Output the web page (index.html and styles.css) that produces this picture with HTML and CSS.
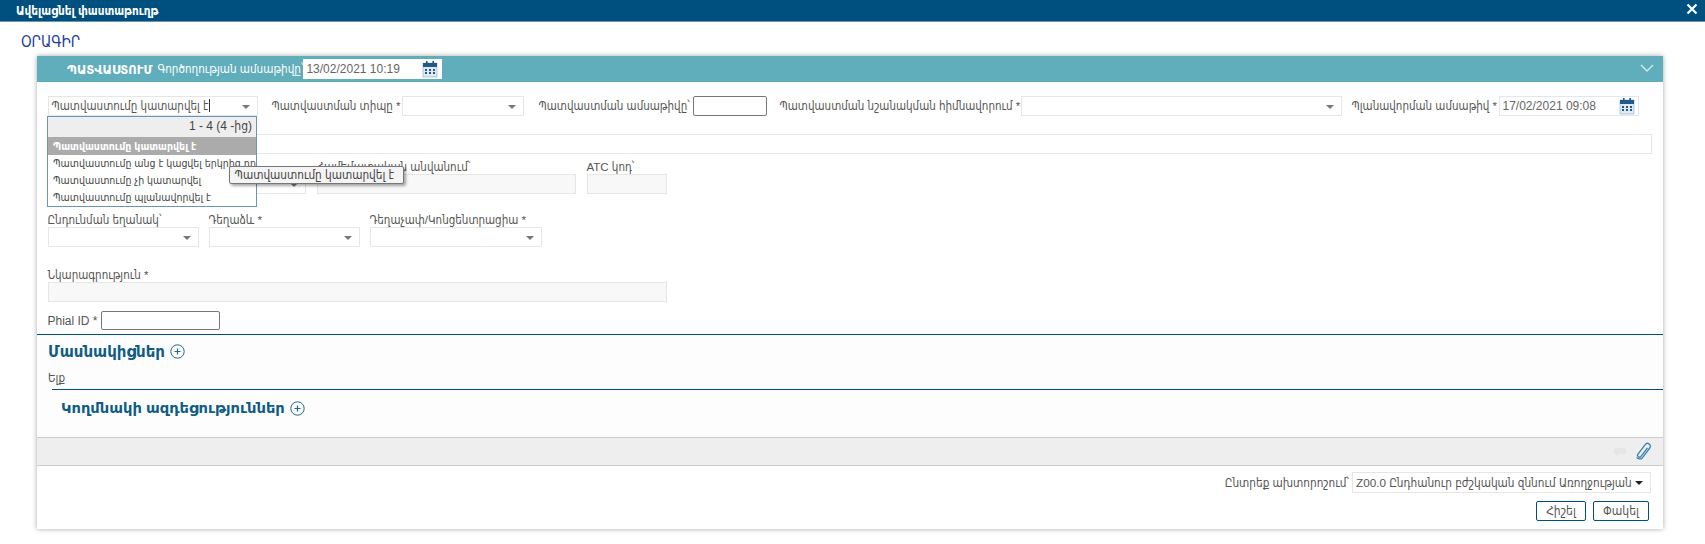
FILE: index.html
```html
<!DOCTYPE html>
<html lang="hy">
<head>
<meta charset="utf-8">
<title>Ավելացնել փաստաթուղթ</title>
<link rel="stylesheet" href="styles.css">
</head>
<body>
<header class="topbar">
  <span class="topbar-title">Ավելացնել փաստաթուղթ</span>
  <svg class="close" width="12" height="12" viewBox="0 0 12 12"><path d="M1.5 1.5l9 9M10.5 1.5l-9 9" stroke="#fff" stroke-width="2.2" fill="none"/></svg>
</header>
<h1 class="page-title">ՕՐԱԳԻՐ</h1>
<section class="panel">
  <div class="panel-head">
    <strong class="panel-name">ՊԱՏՎԱՍՏՈՒՄ</strong>
    <span class="panel-label">Գործողության ամսաթիվը՝</span>
    <div class="date date-head"><span>13/02/2021 10:19</span>
      <svg class="cal" width="16" height="17" viewBox="0 0 16 17"><rect x="1" y="2" width="14" height="14" fill="#dfeaf3" stroke="#8aa9c2" stroke-width=".6"/><rect x="1" y="2" width="14" height="4" fill="#1f5b86"/><rect x="4" y="0" width="1.6" height="3.5" fill="#1f5b86"/><rect x="10.4" y="0" width="1.6" height="3.5" fill="#1f5b86"/><path d="M3 8h2v2H3zM7 8h2v2H7zM11 8h2v2h-2zM3 11h2v2H3zM7 11h2v2H7zM11 11h2v2h-2z" fill="#1f5b86"/></svg>
    </div>
    <svg class="chev" width="14" height="8" viewBox="0 0 14 8"><path d="M1 1l6 6 6-6" stroke="#d5eaef" stroke-width="1.4" fill="none"/></svg>
  </div>

  <div class="form">
    <div class="row row-1">
      <div class="select w-status"><span class="value">Պատվաստումը կատարվել է</span><i class="cursor"></i><i class="caret"></i></div>
      <label class="lbl l-type">Պատվաստման տիպը *</label>
      <div class="select w-type"><i class="caret"></i></div>
      <label class="lbl l-date">Պատվաստման ամսաթիվը՝</label>
      <div class="input w-date"></div>
      <label class="lbl l-reason">Պատվաստման նշանակման հիմնավորում *</label>
      <div class="select w-reason"><i class="caret"></i></div>
      <label class="lbl l-plan">Պլանավորման ամսաթիվ *</label>
      <div class="date date-plan"><span>17/02/2021 09:08</span>
        <svg class="cal" width="16" height="17" viewBox="0 0 16 17"><rect x="1" y="2" width="14" height="14" fill="#dfeaf3" stroke="#8aa9c2" stroke-width=".6"/><rect x="1" y="2" width="14" height="4" fill="#1f5b86"/><rect x="4" y="0" width="1.6" height="3.5" fill="#1f5b86"/><rect x="10.4" y="0" width="1.6" height="3.5" fill="#1f5b86"/><path d="M3 8h2v2H3zM7 8h2v2H7zM11 8h2v2h-2zM3 11h2v2H3zM7 11h2v2H7zM11 11h2v2h-2z" fill="#1f5b86"/></svg>
      </div>
    </div>

    <div class="wide"></div>

    <div class="row row-3">
      <div class="stack"><label class="lbl">Անվանում՝</label><div class="select w-name"><i class="caret"></i></div></div>
      <div class="stack"><label class="lbl">Համեմատական անվանում՝</label><div class="field w-common"></div></div>
      <div class="stack"><label class="lbl">ATC կոդ՝</label><div class="field w-atc"></div></div>
    </div>

    <div class="row row-4">
      <div class="stack"><label class="lbl">Ընդունման եղանակ՝</label><div class="select w-route"><i class="caret"></i></div></div>
      <div class="stack"><label class="lbl">Դեղաձև *</label><div class="select w-route"><i class="caret"></i></div></div>
      <div class="stack"><label class="lbl">Դեղաչափ/Կոնցենտրացիա *</label><div class="select w-dose"><i class="caret"></i></div></div>
    </div>

    <div class="stack row-5"><label class="lbl">Նկարագրություն *</label><div class="field w-desc"></div></div>

    <div class="row row-6"><label class="lbl l-phial">Phial ID *</label><div class="input w-phial"></div></div>

    <div class="dropdown">
      <div class="pager">1 - 4 (4 -ից)</div>
      <div class="opt opt-on">Պատվաստումը կատարվել է</div>
      <div class="opt">Պատվաստումը անց է կացվել երկրից դուրս</div>
      <div class="opt">Պատվաստումը չի կատարվել</div>
      <div class="opt">Պատվաստումը պլանավորվել է</div>
    </div>
    <div class="tip">Պատվաստումը կատարվել է</div>
  </div>

  <div class="sec-one">
    <h2 class="sec-title">Մասնակիցներ
      <svg width="15" height="15" viewBox="0 0 15 15"><circle cx="7.5" cy="7.5" r="6.7" fill="none" stroke="#1d6a8c" stroke-width="1"/><path d="M7.5 4.5v6M4.5 7.5h6" stroke="#1d6a8c" stroke-width="1.2"/></svg>
    </h2>
    <div class="exit">Ելք</div>
    <div class="sec-two">
      <h2 class="sec-title">Կողմնակի ազդեցություններ
        <svg width="15" height="15" viewBox="0 0 15 15"><circle cx="7.5" cy="7.5" r="6.7" fill="none" stroke="#1d6a8c" stroke-width="1"/><path d="M7.5 4.5v6M4.5 7.5h6" stroke="#1d6a8c" stroke-width="1.2"/></svg>
      </h2>
    </div>
  </div>

  <div class="toolbar">
    <svg width="14" height="10" viewBox="0 0 14 10"><path d="M1 1h12v6H6l-3 2V7H1z" fill="#e6e6e6"/></svg>
    <svg width="16" height="20" viewBox="0 0 16 20"><path d="M12.5 5.5l-6.8 9a2 2 0 0 1-3.2-2.4l7.6-10a3 3 0 0 1 4.8 3.6l-7.8 10.4a4 4 0 0 1-6-.6" transform="translate(.6 .6) scale(.95)" fill="none" stroke="#3a82ad" stroke-width="1.4"/></svg>
  </div>

  <div class="footer">
    <div class="diag">
      <label class="lbl">Ընտրեք ախտորոշում՝</label>
      <div class="diag-select"><span class="diag-value">Z00.0 Ընդհանուր բժշկական զննում Առողջության վիճակի</span><i class="caret caret-dark"></i></div>
    </div>
    <div class="btns">
      <button class="btn btn-save">Հիշել</button>
      <button class="btn btn-close">Փակել</button>
    </div>
  </div>
</section>
</body>
</html>
```
FILE: styles.css
```css
* { box-sizing: border-box; }
html, body { margin: 0; padding: 0; }
body {
  width: 1705px;
  height: 544px;
  overflow: hidden;
  background: #fff;
  color: #555;
  font-family: "Liberation Sans", "DejaVu Sans", sans-serif;
  font-size: 12px;
  font-stretch: condensed;
}
.topbar {
  height: 22px;
  background: #00507f;
  border-bottom: 1px solid #6f95ad;
  display: flex;
  align-items: center;
  justify-content: space-between;
  padding: 0 7px 0 16px;
}
.topbar-title { color: #fff; font-weight: bold; font-size: 11.7px; }
.close { margin-top: -3px; }
.page-title {
  margin: 0;
  height: 34px;
  padding: 12px 0 0 21px;
  font-size: 15px;
  line-height: 16px;
  font-weight: normal;
  color: #1b3d9e;
}
.panel {
  margin-left: 37px;
  width: 1626px;
  height: 473px;
  background: #fff;
  box-shadow: 0 0 5px rgba(0,0,0,.35);
  display: flex;
  flex-direction: column;
}
.panel-head {
  height: 26px;
  flex: none;
  background: #60adbb;
  display: flex;
  align-items: center;
  padding-left: 30px;
  color: #fff;
}
.panel-name { font-size: 12.8px; margin-right: 5px; }
.panel-label { font-size: 11.6px; }
.date {
  display: flex;
  align-items: center;
  justify-content: space-between;
  background: #fff;
  color: #666;
  height: 20px;
}
.date-head { width: 139px; padding: 0 4px 0 3px; }
.chev { margin-left: auto; margin-right: 9px; margin-top: -3px; }
.form { position: relative; height: 252px; padding: 14px 0 0 10.5px; flex: none; }
.row { display: flex; align-items: flex-start; }
.lbl { display: block; line-height: 14px; font-size: 11.5px; white-space: nowrap; }
.row-1 { height: 20px; align-items: center; }
.stack { display: flex; flex-direction: column; }
.select, .field, .input {
  height: 20px;
  position: relative;
  flex: none;
  border: 1px solid #e6e6e6;
  background: #fff;
}
.field { background: #f8f8f8; }
.input { border: 1px solid #777; border-radius: 2px; }
.value { padding-left: 3px; line-height: 18px; white-space: nowrap; font-size: 11.5px; }
.cursor {
  display: inline-block;
  width: 1px;
  height: 13px;
  margin-left: 1px;
  background: #333;
  vertical-align: -2px;
}
.caret {
  position: absolute;
  right: 7px;
  top: 8px;
  width: 0;
  height: 0;
  border: 4px solid transparent;
  border-top: 4px solid #777;
  border-bottom: 0;
}
.w-status { width: 210px; }
.l-type { width: 130px; margin-left: 14px; }
.w-type { width: 122px; }
.l-date { width: 154px; margin-left: 15px; }
.w-date { width: 74px; }
.l-reason { width: 241px; margin-left: 13px; }
.w-reason { width: 321px; }
.l-plan { width: 147px; margin-left: 10px; }
.date-plan { width: 140px; padding: 0 3px; border: 1px solid #dfe8ee; }
.wide { height: 20px; margin-top: 18px; width: 1604px; border: 1px solid #e6e6e6; }
.row-3 { margin-top: 6px; gap: 11px; }
.w-name { width: 258px; }
.w-common { width: 259px; }
.w-atc { width: 80px; }
.row-4 { margin-top: 19px; gap: 10px; }
.w-route { width: 151px; }
.w-dose { width: 172px; }
.row-5 { margin-top: 21px; }
.w-desc { width: 619px; }
.row-6 { margin-top: 9px; align-items: center; height: 19px; }
.l-phial { width: 53px; font-size: 12px; }
.w-phial { width: 119px; height: 19px; }
.dropdown {
  position: absolute;
  left: 10px;
  top: 34px;
  width: 210px;
  height: 91px;
  border: 1px solid #6c93bd;
  background: #fff;
}
.pager {
  height: 20px;
  background: #eee;
  text-align: right;
  padding-right: 4px;
  line-height: 19px;
  color: #444;
}
.opt {
  height: 17px;
  line-height: 16px;
  padding-left: 5px;
  white-space: nowrap;
  overflow: hidden;
  font-size: 10.5px;
  color: #444;
}
.opt-on { height: 18px; line-height: 18px; background: #ababab; color: #fff; font-weight: bold; }
.tip {
  position: absolute;
  left: 191.5px;
  top: 84px;
  width: 175px;
  height: 18px;
  line-height: 16px;
  padding-left: 5px;
  background: #f4f4f4;
  border: 1px solid #777;
  border-radius: 2px;
  box-shadow: 2px 2px 3px rgba(0,0,0,.35);
  white-space: nowrap;
  font-size: 11.7px;
  color: #444;
}
.sec-one {
  flex: none;
  height: 103px;
  border-top: 1px solid #00507f;
  background: #fdfdfd;
  padding-left: 11px;
}
.sec-title {
  margin: 0;
  display: flex;
  align-items: center;
  gap: 5px;
  font-size: 15px;
  font-stretch: normal;
  line-height: 20px;
  font-weight: bold;
  color: #0f5c84;
}
.sec-one > .sec-title { padding-top: 4px; height: 25px; box-sizing: content-box; }
.exit { margin-top: 7px; line-height: 14px; font-size: 11.5px; }
.sec-two {
  margin-top: 4px;
  margin-left: 4px;
  border-top: 1px solid #00507f;
  padding: 8px 0 0 9px;
}
.sec-two .sec-title { font-size: 14.7px; }
.toolbar {
  flex: none;
  height: 29px;
  background: #eee;
  border-top: 1px solid #ccc;
  border-bottom: 1px solid #ccc;
  display: flex;
  align-items: center;
  justify-content: flex-end;
  gap: 8px;
  padding-right: 12px;
}
.footer {
  flex: 1;
  padding: 6px 12px 0 0;
  display: flex;
  flex-direction: column;
  align-items: flex-end;
}
.diag { display: flex; align-items: center; gap: 3px; }
.diag .lbl { font-size: 11.7px; }
.diag-select {
  position: relative;
  width: 299px;
  height: 21px;
  border: 1px solid #e6e6e6;
  padding-left: 3px;
  line-height: 19px;
  overflow: hidden;
  font-size: 11.7px;
}
.diag-value { display: block; width: 277px; overflow: hidden; white-space: nowrap; }
.caret-dark { border-top-color: #222; }
.btns { display: flex; gap: 7px; margin-top: 8px; margin-right: 2px; }
.btn {
  height: 20px;
  padding: 0;
  background: #fff;
  border: 1px solid #00507f;
  border-radius: 2px;
  color: #555;
  font: 12px "Liberation Sans", "DejaVu Sans", sans-serif;
  font-stretch: condensed;
}
.btn-save { width: 50px; }
.btn-close { width: 56px; }
```
